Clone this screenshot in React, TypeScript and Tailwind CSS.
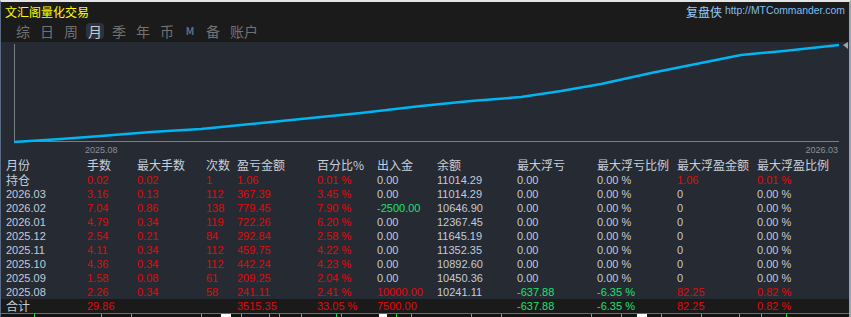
import React from 'react';

type Cell = { v: string; c?: 'r' | 'g' | 'w' };

const cols = ['月份', '手数', '最大手数', '次数', '盈亏金额', '百分比%', '出入金', '余额', '最大浮亏', '最大浮亏比例', '最大浮盈金额', '最大浮盈比例'];

const row = (m: string, lots: string, maxLots: string, n: string, pl: string, pct: string, io: string, bal: string, fl: string, flp: string, fp: string, fpp: string, ioC: 'r' | 'g' | 'w' = 'w', flC: 'g' | 'w' = 'w', fpC: 'r' | 'w' = 'w'): Cell[] => [
  { v: m, c: 'w' },
  { v: lots, c: 'r' },
  { v: maxLots, c: 'r' },
  { v: n, c: 'r' },
  { v: pl, c: 'r' },
  { v: pct, c: 'r' },
  { v: io, c: ioC },
  { v: bal, c: 'w' },
  { v: fl, c: flC },
  { v: flp, c: flC },
  { v: fp, c: fpC },
  { v: fpp, c: fpC },
];

const rows: Cell[][] = [
  row('持仓', '0.02', '0.02', '1', '1.06', '0.01 %', '0.00', '11014.29', '0.00', '0.00 %', '1.06', '0.01 %', 'w', 'w', 'r'),
  row('2026.03', '3.16', '0.13', '112', '367.39', '3.45 %', '0.00', '11014.29', '0.00', '0.00 %', '0', '0.00 %'),
  row('2026.02', '7.04', '0.86', '138', '779.45', '7.90 %', '-2500.00', '10646.90', '0.00', '0.00 %', '0', '0.00 %', 'g'),
  row('2026.01', '4.79', '0.34', '119', '722.26', '6.20 %', '0.00', '12367.45', '0.00', '0.00 %', '0', '0.00 %'),
  row('2025.12', '2.54', '0.21', '84', '292.84', '2.58 %', '0.00', '11645.19', '0.00', '0.00 %', '0', '0.00 %'),
  row('2025.11', '4.11', '0.34', '112', '459.75', '4.22 %', '0.00', '11352.35', '0.00', '0.00 %', '0', '0.00 %'),
  row('2025.10', '4.36', '0.34', '112', '442.24', '4.23 %', '0.00', '10892.60', '0.00', '0.00 %', '0', '0.00 %'),
  row('2025.09', '1.58', '0.08', '61', '209.25', '2.04 %', '0.00', '10450.36', '0.00', '0.00 %', '0', '0.00 %'),
  row('2025.08', '2.26', '0.34', '58', '241.11', '2.41 %', '10000.00', '10241.11', '-637.88', '-6.35 %', '82.25', '0.82 %', 'r', 'g', 'r'),
];

const total: Cell[] = [
  { v: '合计', c: 'w' },
  { v: '29.86', c: 'r' },
  { v: '' },
  { v: '' },
  { v: '3515.35', c: 'r' },
  { v: '33.05 %', c: 'r' },
  { v: '7500.00', c: 'r' },
  { v: '' },
  { v: '-637.88', c: 'g' },
  { v: '-6.35 %', c: 'g' },
  { v: '82.25', c: 'r' },
  { v: '0.82 %', c: 'r' },
];

const color = { r: 'text-[#e00a0a]', g: 'text-[#1ee070]', w: 'text-[#c4cbd8]' };

const grid = 'grid grid-cols-[81px_50px_69px_31px_80px_60px_60px_80px_80px_80px_80px_1fr] pl-[5px]';
const font = "font-['Liberation_Sans','Noto_Sans_CJK_SC',sans-serif]";
const cjk = "font-['Noto_Sans_CJK_SC',sans-serif]";

const tabs = ['综', '日', '周', '月', '季', '年', '币', 'M', '备', '账户'];

const curve = [
  [13, 100], [60, 97], [100, 94], [150, 90], [200, 87], [250, 82], [300, 77], [360, 71], [420, 64],
  [470, 59], [520, 55], [560, 49], [600, 42], [650, 31], [700, 21], [740, 13], [783, 9], [838, 3],
];

export default function App() {
  return (
    <div className={`w-[851px] h-[317px] overflow-hidden flex flex-col bg-[#1b1b1b] border-t-2 border-[#e4e4e4] border-l border-l-[#5a6a80] border-r-2 border-r-[#9aa4b4] ${font}`}>
      <div className="h-[40px] flex flex-col">
        <div className="flex items-center justify-between h-[19px] pl-[4px] pr-[4px]">
          <span className={`text-[12px] leading-none text-[#ffff00] ${cjk}`}>文汇阁量化交易</span>
          <span className="flex items-center gap-[3px]">
            <span className={`text-[12px] leading-none text-[#9ccbf2] ${cjk}`}>复盘侠</span>
            <span className="text-[10.4px] leading-none text-[#80bdf0] font-['Liberation_Sans',sans-serif]">http://MTCommander.com</span>
          </span>
        </div>
        <div className={`flex items-center h-[19px] pl-[13px] gap-[6px] ${cjk}`}>
          {tabs.map((t) =>
            t === 'M' ? (
              <span key={t} className="w-[16px] text-center text-[10px] font-bold text-[#5a7088]">M</span>
            ) : (
              <span
                key={t}
                className={`text-[14px] leading-[16px] px-[2px] rounded-sm ${t === '月' ? 'bg-[#2c333d] text-[#c8ccd2]' : 'text-[#727272]'}`}
              >
                {t}
              </span>
            )
          )}
        </div>
      </div>

      <div className="flex-1 flex flex-col bg-[#252a33]">
        <div className="relative h-[115px]">
          <svg width="848" height="115" className="block">
            <line x1="13.5" y1="2" x2="13.5" y2="100" stroke="#7a7e86" strokeWidth="1" />
            <line x1="13" y1="99.5" x2="838" y2="99.5" stroke="#7a7e86" strokeWidth="1" />
            <polyline
              points={curve.map((p) => p.join(',')).join(' ')}
              fill="none"
              stroke="#00b6f2"
              strokeWidth="2.5"
              strokeLinejoin="round"
            />
            <polygon points="842,3 847,0 847,7" fill="#a0a4aa" />
            <text x="84" y="111" fontSize="9" fill="#8a909a" fontFamily="Liberation Sans, sans-serif">2025.08</text>
            <text x="837" y="111" fontSize="9" fill="#8a909a" textAnchor="end" fontFamily="Liberation Sans, sans-serif">2026.03</text>
          </svg>
        </div>

        <div className={`${grid} h-[16px] items-center text-[12px] text-[#c8d0dc] ${cjk}`}>
          {cols.map((c) => (
            <span key={c} className="leading-none whitespace-nowrap">{c}</span>
          ))}
        </div>

        {rows.map((r, i) => (
          <div key={i} className={`${grid} h-[14px] items-center text-[11px]`}>
            {r.map((c, j) => (
              <span
                key={j}
                className={`leading-none whitespace-nowrap ${c.c ? color[c.c] : ''} ${j === 0 && i === 0 ? `text-[12px] ${cjk}` : ''}`}
              >
                {c.v}
              </span>
            ))}
          </div>
        ))}

        <div className={`${grid} h-[14px] items-center text-[11px] bg-[#1a1a1a]`}>
          {total.map((c, j) => (
            <span
              key={j}
              className={`leading-none whitespace-nowrap ${c.c ? color[c.c] : ''} ${j === 0 ? `text-[12px] ${cjk}` : ''}`}
            >
              {c.v}
            </span>
          ))}
        </div>

        <div className="h-[4px] bg-[#121212] border-t border-[#6a6e74]">
          <svg width="848" height="3" className="block">
            {[33, 100, 130, 200, 222, 240, 268, 278, 300, 335, 340, 380, 395, 410, 470, 500, 590, 620, 640, 660, 700, 738, 760, 785].map((x) => (
              <rect key={x} x={x} y="0" width="1" height="3" fill="#1ee040" />
            ))}
            <rect x="220" y="0" width="10" height="3" fill="#ffffff" />
            <rect x="378" y="0" width="8" height="3" fill="#ffffff" />
            <rect x="636" y="0" width="10" height="3" fill="#ffffff" />
          </svg>
        </div>
      </div>
    </div>
  );
}
